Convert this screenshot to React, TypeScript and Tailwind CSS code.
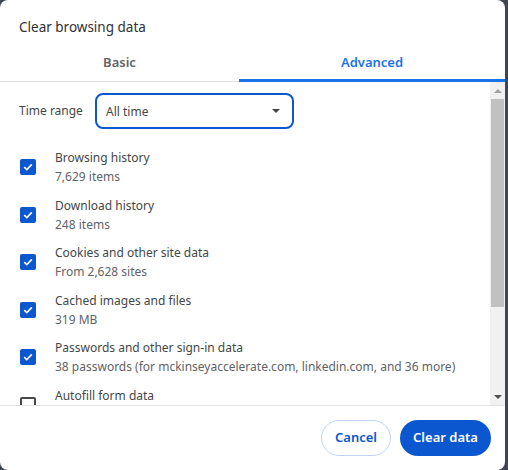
import React from "react";

const items = [
  { title: "Browsing history", sub: "7,629 items", checked: true },
  { title: "Download history", sub: "248 items", checked: true },
  { title: "Cookies and other site data", sub: "From 2,628 sites", checked: true },
  { title: "Cached images and files", sub: "319 MB", checked: true },
  {
    title: "Passwords and other sign-in data",
    sub: "38 passwords (for mckinseyaccelerate.com, linkedin.com, and 36 more)",
    checked: true,
  },
  { title: "Autofill form data", sub: "", checked: false },
];

function Check({ checked }: { checked: boolean }) {
  if (!checked)
    return <div className="w-[16px] h-[16px] rounded-[2px] border-2 border-[#474747] bg-white" />;
  return (
    <div className="w-[16px] h-[16px] rounded-[2px] bg-[#0b57d0] flex items-center justify-center">
      <svg width="10" height="8" viewBox="0 0 10 8">
        <path d="M1.2 4.2 L3.8 6.6 L8.8 1.4" stroke="white" strokeWidth="1.6" fill="none" />
      </svg>
    </div>
  );
}

export default function App() {
  return (
    <div
      className="w-[508px] h-[470px] bg-[#3f4652] overflow-hidden"
      style={{ fontFamily: '"Noto Sans", "Open Sans", sans-serif' }}
    >
      <div className="w-[505px] h-[470px] bg-white rounded-[8px] flex flex-col">
        <div className="h-[44px] pt-[16px] pl-[19px] text-[13.5px] leading-[22px] text-[#303134]">
          Clear browsing data
        </div>
        <div className="h-[38px] flex border-b border-[#e3e3e3]">
          <div className="w-[239px] flex items-center justify-center text-[13px] font-semibold text-[#5f6368]">
            Basic
          </div>
          <div className="flex-1 flex items-center justify-center text-[13px] font-semibold text-[#1a73e8] border-b-[3px] border-[#1a73e8] mb-[-1px] pt-[3px]">
            Advanced
          </div>
        </div>
        <div className="h-[323px] flex overflow-hidden">
          <div className="flex-1 flex flex-col pl-[19px] pt-[11px]">
            <div className="flex items-center h-[36px]">
              <span className="text-[12px] text-[#444746] w-[76px]">Time range</span>
              <div className="w-[199px] h-[36px] border-2 border-[#0b57d0] rounded-[8px] flex items-center justify-between pl-[9px] pr-[12px]">
                <span className="text-[12px] text-[#444746] pt-[1px]">All time</span>
                <svg width="8" height="4" viewBox="0 0 8 4">
                  <path d="M0 0 L8 0 L4 4 Z" fill="#474747" />
                </svg>
              </div>
            </div>
            <div className="flex flex-col gap-[9.5px] mt-[19px]">
              {items.map((it) => (
                <div key={it.title} className="flex items-center h-[38px]">
                  <div className="w-[36px] pl-[1px]">
                    <Check checked={it.checked} />
                  </div>
                  <div className="flex flex-col text-[12px] leading-[19px]">
                    <span className="text-[#444746] whitespace-nowrap">{it.title}</span>
                    <span className="text-[#5f6368] whitespace-nowrap h-[19px]">{it.sub}</span>
                  </div>
                </div>
              ))}
            </div>
          </div>
          <div className="w-[15px] bg-[#f1f1f1] flex flex-col items-center">
            <div className="h-[17px] flex items-center justify-center">
              <svg width="8" height="4" viewBox="0 0 8 4">
                <path d="M0 4 L8 4 L4 0 Z" fill="#a3a3a3" />
              </svg>
            </div>
            <div className="w-[13px] h-[208px] bg-[#c1c1c1]" />
            <div className="flex-1" />
            <div className="h-[17px] flex items-center justify-center">
              <svg width="8" height="4" viewBox="0 0 8 4">
                <path d="M0 0 L8 0 L4 4 Z" fill="#505050" />
              </svg>
            </div>
          </div>
        </div>
        <div className="flex-1 border-t border-[#e3e3e3] flex items-center justify-end gap-[9px] pr-[14px]">
          <button className="w-[70px] h-[36px] rounded-full border border-[#c2d5f5] text-[#0b57d0] text-[13px] font-semibold">
            Cancel
          </button>
          <button className="w-[91px] h-[36px] rounded-full bg-[#0b57d0] text-white text-[13px] font-semibold">
            Clear data
          </button>
        </div>
      </div>
    </div>
  );
}
